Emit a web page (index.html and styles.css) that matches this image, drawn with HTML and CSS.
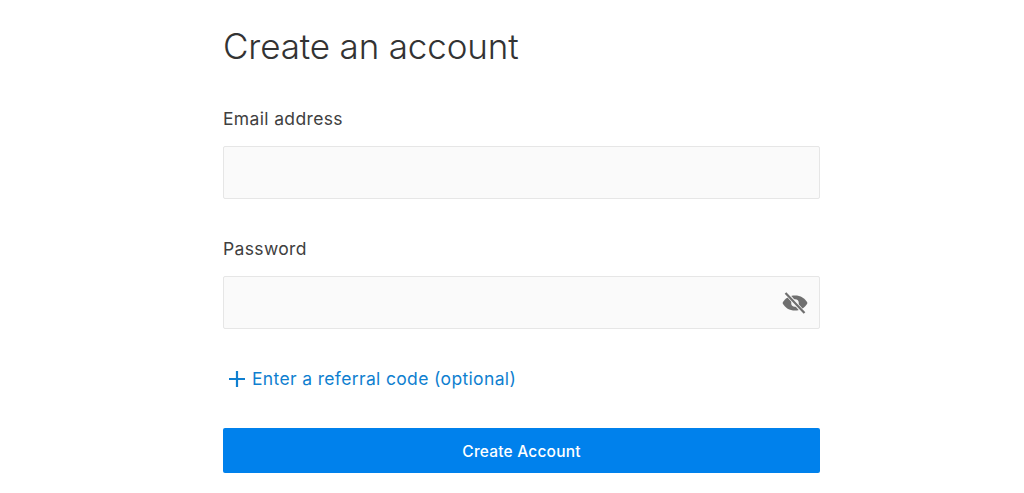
FILE: index.html
```html
<!DOCTYPE html>
<html lang="en">
<head>
<meta charset="utf-8">
<title>Create an account</title>
<link rel="stylesheet" href="styles.css">
</head>
<body>
<main class="form">
  <h1 class="title">Create an account</h1>
  <label class="label label-email" for="email">Email address</label>
  <input class="input" id="email" type="email">
  <label class="label label-password" for="password">Password</label>
  <div class="password-wrap">
    <input class="input" id="password" type="password">
    <svg class="eye" viewBox="0 0 26 22" width="26" height="22" aria-hidden="true">
      <path d="M0.500 11C3 6 7.500 3.500 13 3.500S23 6 25.500 11C23 16 18.500 18.500 13 18.500S3 16 0.500 11Z" fill="#6f6f6f"/>
      <circle cx="13" cy="11" r="3.800" fill="#f2f2f2"/>
      <path d="M4.500 1.500 21.500 20.500" stroke="#fafafa" stroke-width="4"/>
      <path d="M3.500 1 22.500 21" stroke="#6f6f6f" stroke-width="2.200"/>
    </svg>
  </div>
  <a class="referral" href="#">
    <svg class="plus" viewBox="0 0 16 16" width="16" height="16" aria-hidden="true"><path d="M8 0v16M0 8h16" stroke="#0f7fd0" stroke-width="2.200"/></svg>
    <span>Enter a referral code (optional)</span>
  </a>
  <button class="submit" type="button">Create Account</button>
</main>
</body>
</html>
```
FILE: styles.css
```css
* { box-sizing: border-box; }
html, body { margin: 0; background: #fff; }
body { height: 493px; overflow: hidden; font-family: Inter, "Liberation Sans", sans-serif; }
.form { width: 597px; margin-left: 223px; display: flex; flex-direction: column; align-items: stretch; }
.title { margin: 24px 0 0; font-size: 35px; line-height: 44px; font-weight: 300; letter-spacing: -0.150px; color: #333; }
.label { display: block; font-size: 17.500px; line-height: 22px; letter-spacing: 0.350px; color: #404040; font-weight: 400; }
.label-email { margin-top: 40px; }
.label-password { margin-top: 39px; }
.input { display: block; width: 100%; height: 53px; margin-top: 16px; padding: 0 12px; background: #fafafa; border: 1px solid #e6e6e6; border-radius: 2px; outline: none; }
.password-wrap { position: relative; }
.eye { position: absolute; right: 12px; top: 32px; }
.referral { display: flex; align-items: center; gap: 7px; margin-top: 39px; padding-left: 6px; height: 22px; font-size: 17.500px; line-height: 22px; letter-spacing: 0.350px; color: #0f7fd0; text-decoration: none; }
.plus { flex: none; }
.submit { height: 45px; margin-top: 38px; background: #0081ec; border: 0; border-radius: 2px; color: #fff; font: 500 15.500px/45px Inter, "Liberation Sans", sans-serif; letter-spacing: 0.200px; }
```
